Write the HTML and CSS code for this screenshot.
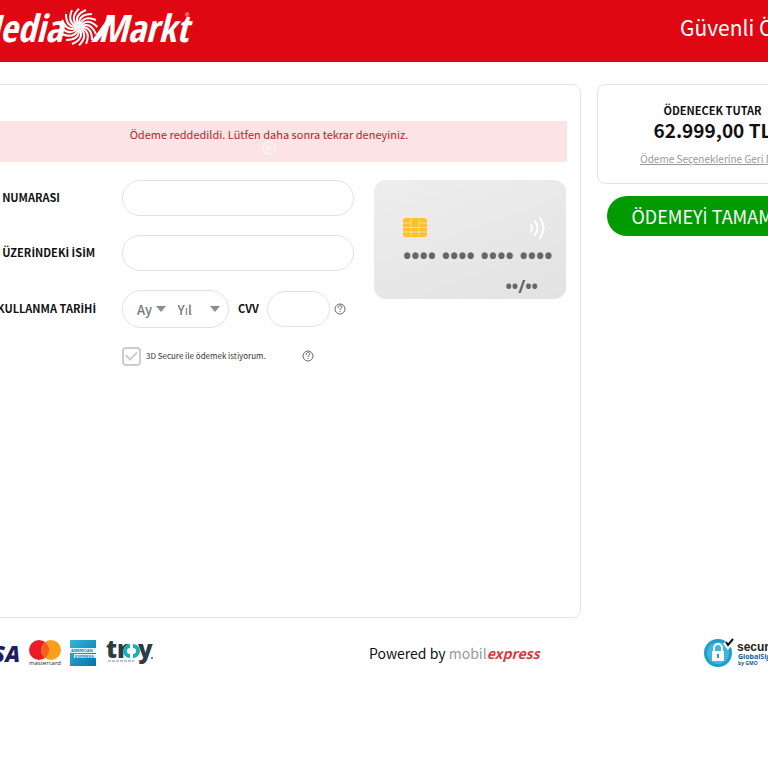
FILE: index.html
```
<!DOCTYPE html>
<html lang="tr">
<head>
  <meta charset="UTF-8">
  <meta name="viewport" content="width=device-width, initial-scale=1.0">
  <title>Güvenli Ödeme</title>
  <link rel="stylesheet" href="styles.css">
</head>
<body>
  <header class="header">
    <div class="shell header-inner">
      <a href="#" class="logo" aria-label="MediaMarkt">
        <svg width="240" height="40" viewBox="0 0 240 40">
          <text class="logo-text" x="106" y="35" text-anchor="end">Media</text>
          <g id="swirl" fill="none" stroke="#fff" stroke-width="2"></g>
          <circle cx="122" cy="20" r="3" fill="#fff"/>
          <path d="M134 35h6l14-18 2-9h-3z" fill="#fff"/>
          <text class="logo-text" x="141" y="35">Markt</text>
          <text class="logo-reg" x="228" y="10">®</text>
        </svg>
      </a>
      <h1>Güvenli Ödeme</h1>
    </div>
  </header>

  <main class="shell content">
    <form class="panel" id="paymentForm">
      <div class="alert" role="alert">
        Ödeme reddedildi. Lütfen daha sonra tekrar deneyiniz.
        <button type="button" class="alert-close" aria-label="Kapat">
          <svg width="14" height="14" viewBox="0 0 14 14" fill="none" stroke="#fff"><circle cx="7" cy="7" r="6"/><path d="M4 4l6 6M10 4l-6 6"/></svg>
        </button>
      </div>

      <div class="columns">
        <div class="fields">
          <div class="row">
            <label for="cardNumber">KART NUMARASI</label>
            <input type="text" id="cardNumber" class="text-box">
          </div>
          <div class="row">
            <label for="cardName">KART ÜZER<span class="dotted">İ</span>NDEK<span class="dotted">İ</span> <span class="dotted">İ</span>S<span class="dotted">İ</span>M</label>
            <input type="text" id="cardName" class="text-box">
          </div>
          <div class="row">
            <label for="month">SON KULLANMA TAR<span class="dotted">İ</span>H<span class="dotted">İ</span></label>
            <div class="expiry">
              <div class="date-box">
                <span class="select month"><select id="month"><option>Ay</option></select></span>
                <span class="select year"><select id="year" aria-label="Yıl"><option>Yıl</option></select></span>
              </div>
              <label for="cvv">CVV</label>
              <input type="text" id="cvv" class="text-box cvv">
              <svg class="help" viewBox="0 0 12 12"><circle cx="6" cy="6" r="5"/><path d="M4 5c0-3 4-3 4-1 0 1-2 1-2 3M6 8v1"/></svg>
            </div>
          </div>
          <div class="secure-row">
            <input type="checkbox" id="secure" checked>
            <label for="secure">3D Secure ile ödemek istiyorum.</label>
            <svg class="help" viewBox="0 0 12 12"><circle cx="6" cy="6" r="5"/><path d="M4 5c0-3 4-3 4-1 0 1-2 1-2 3M6 8v1"/></svg>
          </div>
        </div>

        <div class="card">
          <div class="card-top">
            <svg width="24" height="20" viewBox="0 0 24 20">
              <rect width="24" height="19" rx="3" fill="#fbc02d"/>
              <path d="M0 9.500h24M8 0v19M16 0v19M0 5h8M16 5h8M0 14h24" fill="none" stroke="#fbe09a"/>
            </svg>
            <svg width="18" height="24" viewBox="0 0 18 24" fill="none" stroke="#fff" stroke-width="2" stroke-linecap="round">
              <path d="M3 9q2 3 0 6M7 5q5 7 0 14M12 2q7 10 0 20"/>
            </svg>
          </div>
          <div class="card-number">•••• •••• •••• ••••</div>
          <div class="card-date">••/••</div>
        </div>
      </div>
    </form>

    <aside>
      <div class="summary">
        <h2>ÖDENECEK TUTAR</h2>
        <p class="amount">62.999,00 TL</p>
        <a href="#">Ödeme Seçeneklerine Geri Dön</a>
      </div>
      <button type="submit" form="paymentForm" class="pay">ÖDEMEY<span class="dotted">İ</span> TAMAMLA</button>
    </aside>
  </main>

  <footer class="shell footer">
    <div class="brands">
      <span class="visa">VISA</span>
      <svg width="34" height="28" viewBox="0 0 34 28">
        <circle cx="11" cy="11" r="10" fill="#eb1c26"/>
        <circle cx="23" cy="11" r="10" fill="#f99f1b"/>
        <path d="M17 3a10 10 0 0 1 0 16a10 10 0 0 1 0-16" fill="#f26122"/>
        <text class="mc-text" x="17" y="26" text-anchor="middle">mastercard</text>
      </svg>
      <svg width="26" height="28" viewBox="0 0 26 28">
        <defs>
          <linearGradient id="amex" x2="1" y2="1"><stop stop-color="#35b5dc"/><stop offset="1" stop-color="#0872a8"/></linearGradient>
        </defs>
        <rect width="26" height="26" y="1" fill="url(#amex)"/>
        <path d="M0 9h26v5H0zM4 15h22v4H4z" fill="#e6f6fb"/>
        <text class="amex-text" x="1" y="13">AMERICAN</text>
        <text class="amex-text" x="5" y="19">EXPRESS</text>
      </svg>
      <svg width="50" height="28" viewBox="0 0 50 28">
        <text class="troy-text" x="2" y="19">tr</text>
        <path d="M26 7a5 5 0 0 0 0 10M29 7a5 5 0 0 1 0 10" fill="none" stroke="#17b1b5" stroke-width="4"/>
        <text class="troy-text" x="34" y="19">y</text>
        <path d="M4 22h26" stroke="#7b9095" stroke-dasharray="3 1"/>
        <circle cx="48" cy="19" r="1" fill="#555"/>
      </svg>
    </div>
    <div class="powered">Powered by <span class="mobil">mobil</span><span class="express">express</span></div>
    <svg width="124" height="30" viewBox="0 0 124 30">
      <circle cx="14" cy="15" r="14" fill="#1c9fcb"/>
      <circle cx="14" cy="15" r="11" fill="#43b5da"/>
      <path d="M10 14v-4a4 4 0 0 1 8 0v4" fill="none" stroke="#fff" stroke-width="2"/>
      <rect x="8" y="13" width="12" height="10" rx="1" fill="#fff"/>
      <path d="M14 16v4" stroke="#1c9fcb" stroke-width="2"/>
      <path d="M21 4l3 4 6-7" fill="none" stroke="#fff" stroke-width="5"/>
      <path d="M22 4l2 3 5-6" fill="none" stroke="#111" stroke-width="2"/>
      <text class="seal-title" x="33" y="13">secured by</text>
      <text class="seal-name" x="34" y="21">GlobalSign</text>
      <text class="seal-by" x="34" y="27">by GMO</text>
    </svg>
  </footer>

  <script>
    // logo swirl: one curved blade, repeated round the centre
    const swirl = document.getElementById('swirl');
    for (let i = 0; i < 16; i++) {
      const blade = document.createElementNS('http://www.w3.org/2000/svg', 'path');
      blade.setAttribute('d', 'M122 17q0-10 13-10');
      blade.setAttribute('transform', `rotate(${i * 360 / 16} 122 20)`);
      swirl.appendChild(blade);
    }
  </script>
</body>
</html>
```
FILE: styles.css
```
* {
  box-sizing: border-box;
}
body {
  margin: 0;
  overflow: hidden;
  background: #fff;
  color: #111;
  font-family: "Noto Sans CJK SC", "Open Sans", sans-serif;
  font-size: 11px;
  line-height: 20px;
}
h1, h2, p {
  margin: 0;
}
input, select, button {
  font-family: inherit;
}
/* the CJK face has no dotted capital I */
.dotted {
  font-family: "Open Sans", sans-serif;
}
.shell {
  margin: 0 -60px 0 -43px;
}
.header {
  background: #df0711;
  color: #fff;
}
.header-inner {
  display: flex;
  align-items: center;
  justify-content: space-between;
  height: 62px;
  padding-bottom: 8px;
}
.header h1 {
  width: 148px;
  font-size: 21px;
  line-height: 32px;
  font-weight: 400;
  white-space: nowrap;
}
.logo {
  display: flex;
}
.logo-text {
  font: italic bold 38px "Open Sans Condensed", "Roboto Condensed", "Liberation Sans Narrow", sans-serif;
  fill: #fff;
}
.logo-reg {
  font: 6px "Liberation Sans", sans-serif;
  fill: #fff;
}
.content {
  display: grid;
  grid-template-columns: 1fr 231px;
  gap: 16px;
  padding-top: 22px;
}
.panel {
  min-height: 534px;
  padding: 36px 13px;
  border: 1px solid #e4e4e4;
  border-radius: 8px;
}
.alert {
  height: 41px;
  padding-top: 3px;
  background: #fce4e4;
  color: #b9252b;
  text-align: center;
  position: relative;
}
.alert-close {
  position: absolute;
  top: 20px;
  left: 50%;
  margin-left: -7px;
  padding: 0;
  border: 0;
  background: none;
  line-height: 0;
}
.columns {
  display: flex;
  justify-content: space-between;
  padding: 18px 1px 0 0;
}
.fields {
  display: flex;
  flex-direction: column;
  gap: 19px;
}
.row {
  display: grid;
  grid-template-columns: 151px auto;
  align-items: center;
}
.row label {
  font-weight: 700;
  line-height: 18px;
  padding-bottom: 2px;
  white-space: nowrap;
}
.text-box {
  width: 232px;
  height: 36px;
  padding: 0 16px;
  border: 1px solid #e2e2e2;
  border-radius: 18px;
  font-size: 13px;
}
.expiry {
  display: flex;
  align-items: center;
}
.date-box {
  display: flex;
  gap: 12px;
  width: 107px;
  height: 38px;
  margin-right: 9px;
  padding: 0 8px 0 14px;
  border: 1px solid #e2e2e2;
  border-radius: 19px;
}
.select {
  display: flex;
  position: relative;
}
.month {
  width: 29px;
}
.year {
  width: 43px;
}
.select::after {
  content: "";
  position: absolute;
  top: 15px;
  right: 0;
  border: 5px solid transparent;
  border-top: 6px solid #8c8c8c;
  border-bottom: 0;
  pointer-events: none;
}
select {
  width: 100%;
  padding: 0;
  border: 0;
  background: none;
  appearance: none;
  color: #777;
  font-size: 13px;
  font-weight: 500;
}
.cvv {
  width: 63px;
  margin: 0 4px 0 8px;
}
.help {
  width: 12px;
  height: 12px;
  fill: none;
  stroke: #666;
}
.secure-row {
  display: flex;
  align-items: center;
  height: 18px;
  padding-left: 151px;
}
.secure-row label {
  width: 161px;
  padding-left: 5px;
  font-size: 8px;
  color: #333;
}
input[type="checkbox"] {
  appearance: none;
  width: 19px;
  height: 19px;
  margin: 0;
  border: 2px solid #ccc;
  border-radius: 4px;
  display: grid;
  place-items: center;
}
input[type="checkbox"]:checked::before {
  content: "";
  width: 9px;
  height: 5px;
  margin-bottom: 3px;
  border: solid #ccc;
  border-width: 0 0 2px 2px;
  transform: rotate(-45deg);
}
.card {
  width: 192px;
  height: 119px;
  padding: 36px 8px 0 29px;
  border-radius: 12px;
  background: linear-gradient(160deg, #eeeeee, #e2e2e2);
  color: #666;
  font-family: "Open Sans", sans-serif;
  font-weight: 700;
}
.card-top {
  display: flex;
  justify-content: space-between;
  align-items: center;
  padding-right: 12px;
}
.card-number {
  padding-top: 3px;
  font-size: 22px;
  line-height: 24px;
  white-space: nowrap;
}
.card-date {
  padding: 10px 20px 0 0;
  font-size: 17px;
  line-height: 20px;
  text-align: right;
}
.summary {
  height: 100px;
  padding: 15px 0;
  border: 1px solid #e4e4e4;
  border-radius: 8px;
  text-align: center;
  white-space: nowrap;
}
.summary h2 {
  font-size: 11px;
  line-height: 20px;
}
.amount {
  font-size: 19px;
  line-height: 20px;
  font-weight: 700;
}
.summary a {
  display: block;
  padding-top: 9px;
  color: #999;
  font-size: 10px;
}
.pay {
  display: block;
  width: 211px;
  height: 40px;
  margin: 12px auto;
  padding: 0;
  border: 0;
  border-radius: 20px;
  background: #009b00;
  color: #fff;
  font-size: 18px;
  line-height: 40px;
  white-space: nowrap;
}
.footer {
  display: grid;
  grid-template-columns: 398px 1fr auto;
  align-items: center;
  padding: 20px 0 0 14px;
}
.brands {
  display: flex;
  align-items: center;
  gap: 8px;
}
.visa {
  width: 49px;
  display: flex;
  justify-content: flex-end;
  color: #1f1f5f;
  font: italic 800 22px "Open Sans", sans-serif;
}
.mc-text {
  font: 6px "Open Sans", sans-serif;
  fill: #222;
}
.amex-text {
  font: bold 4px "Liberation Sans", sans-serif;
  fill: #1486b8;
}
.troy-text {
  font: 800 24px "Open Sans", sans-serif;
  fill: #2d3c43;
}
.powered {
  font: 14px "Noto Sans CJK SC", sans-serif;
  white-space: nowrap;
}
.mobil {
  color: #999;
}
.express {
  color: #dc3540;
  font-weight: 700;
  font-style: italic;
}
.seal-title {
  font: bold 12px "Liberation Sans", sans-serif;
  fill: #222;
}
.seal-name {
  font: bold 7px "Open Sans", sans-serif;
  fill: #155a9a;
}
.seal-by {
  font: bold 5px "Open Sans", sans-serif;
  fill: #155a9a;
}
```
